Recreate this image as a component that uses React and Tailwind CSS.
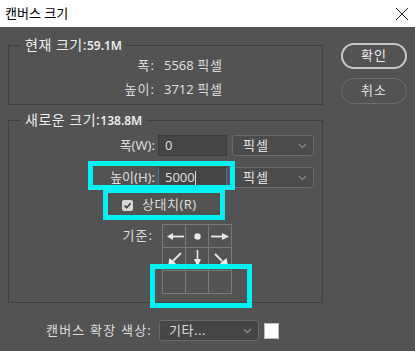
import React from 'react';

const font = { fontFamily: '"Noto Sans", "Noto Sans CJK KR", sans-serif' };

function Chevron() {
  return (
    <svg width="9" height="6" viewBox="0 0 9 6" className="shrink-0">
      <path d="M1 1.2 L4.5 4.6 L8 1.2" fill="none" stroke="#9a9a9a" strokeWidth="1.1" />
    </svg>
  );
}

function UnitSelect({ label, className = '' }) {
  return (
    <div className={`flex items-center justify-between h-[21px] rounded-[3px] border border-[#6a6a6a] bg-[#4b4b4b] pl-[10px] pr-[6px] text-[13px] text-[#e2e2e2] ${className}`}>
      <span className="tracking-[1px]">{label}</span>
      <Chevron />
    </div>
  );
}

function Arrow({ kind }) {
  const c = '#e8e8e8';
  const shapes = {
    dot: <circle cx="11.5" cy="11.5" r="3.2" fill={c} />,
    left: (
      <>
        <line x1="21" y1="11.5" x2="9" y2="11.5" stroke={c} strokeWidth="1.8" />
        <path d="M4 11.5 L10 8 L10 15 Z" fill={c} />
      </>
    ),
    right: (
      <>
        <line x1="2" y1="11.5" x2="14" y2="11.5" stroke={c} strokeWidth="1.8" />
        <path d="M20 11.5 L13 8 L13 15 Z" fill={c} />
      </>
    ),
    down: (
      <>
        <line x1="11.5" y1="2" x2="11.5" y2="12" stroke={c} strokeWidth="1.6" />
        <path d="M11.5 19 L8 11 L15 11 Z" fill={c} />
      </>
    ),
    downLeft: (
      <>
        <line x1="18" y1="5" x2="10" y2="13" stroke={c} strokeWidth="1.8" />
        <path d="M5 18 L6.5 10 L13 15.5 Z" fill={c} />
      </>
    ),
    downRight: (
      <>
        <line x1="6" y1="6" x2="13" y2="13" stroke={c} strokeWidth="1.8" />
        <path d="M19 18 L17.5 10 L11 15.5 Z" fill={c} />
      </>
    ),
  };
  return (
    <svg width="23" height="23" viewBox="0 0 23 23" className="overflow-visible">
      {shapes[kind]}
    </svg>
  );
}

export default function App() {
  const cells = ['left', 'dot', 'right', 'downLeft', 'down', 'downRight', null, null, null];

  return (
    <div className="w-[415px] h-[351px] bg-[#535353] flex flex-col overflow-hidden" style={font}>
      {/* title bar */}
      <div className="h-[27px] bg-white flex items-center justify-between pl-[5px] pr-[6px] shrink-0">
        <span className="text-[13px] text-black">캔버스 크기</span>
        <svg width="14" height="14" viewBox="0 0 14 14">
          <path d="M1 1 L13 13 M13 1 L1 13" stroke="#222" strokeWidth="1" />
        </svg>
      </div>

      <div className="relative flex flex-1">
        {/* left column */}
        <div className="w-[323px] pl-[8px] pt-[10px] flex flex-col">
          {/* current size */}
          <fieldset className="border border-[#3f3f3f] pb-[5px]">
            <legend className="ml-[12px] px-[4px] leading-[16px] text-[14px] text-[#ececec] tracking-[0.5px]">
              현재 크기:<span className="text-[12px] font-semibold tracking-normal">59.1M</span>
            </legend>
            <div className="grid grid-cols-[146px_1fr] gap-x-[9px] gap-y-[4px] mt-[1px] text-[13px] text-[#dcdcdc] leading-[20px]">
              <span className="text-right tracking-[1px]">폭:</span>
              <span>5568 <span className="tracking-[1px]">픽셀</span></span>
              <span className="text-right tracking-[1px]">높이:</span>
              <span>3712 <span className="tracking-[1px]">픽셀</span></span>
            </div>
          </fieldset>

          {/* new size */}
          <fieldset className="mt-[7px] border border-[#3f3f3f] pb-[8px]">
            <legend className="ml-[12px] px-[4px] leading-[16px] text-[14px] text-[#ececec] tracking-[0.5px]">
              새로운 크기:<span className="text-[12px] font-semibold tracking-normal">138.8M</span>
            </legend>
            <div className="flex items-center mt-[6px] text-[13px] text-[#dcdcdc]">
              <span className="w-[146px] text-right">폭(W):</span>
              <div className="ml-[3px] w-[69px] h-[21px] bg-[#454545] border border-[#3a3a3a] flex items-center pl-[6px]">0</div>
              <UnitSelect label="픽셀" className="ml-[5px] w-[82px]" />
            </div>
            <div className="flex items-center mt-[11px] text-[13px] text-[#dcdcdc]">
              <span className="w-[146px] text-right">높이(H):</span>
              <div className="ml-[3px] w-[69px] h-[21px] bg-[#454545] border-x border-y border-x-[#4a6ea8] border-y-[#3a3a3a] flex items-center pl-[6px]">
                5000<span className="w-px h-[14px] bg-[#e0e0e0]" />
              </div>
              <UnitSelect label="픽셀" className="ml-[5px] w-[82px]" />
            </div>
            <div className="flex items-center mt-[9px] pl-[113px] h-[16px] text-[13px] text-[#dcdcdc]">
              <span className="w-[11px] h-[11px] rounded-[2px] bg-[#d8d8d8] flex items-center justify-center">
                <svg width="9" height="9" viewBox="0 0 9 9">
                  <path d="M1.5 4.6 L3.7 6.7 L7.6 2.2" fill="none" stroke="#3a3a3a" strokeWidth="1.6" />
                </svg>
              </span>
              <span className="ml-[9px] tracking-[0.5px]">상대치(R)</span>
            </div>
            <div className="flex items-start mt-[11px] text-[13px] text-[#dcdcdc]">
              <span className="w-[144px] text-right mt-[1px] leading-[20px] tracking-[1px]">기준:</span>
              <div className="ml-[9px] grid grid-cols-[repeat(3,23px)] border-l border-t border-[#7a7a7a]">
                {cells.map((k, i) => (
                  <div key={i} className="w-[23px] h-[23px] border-r border-b border-[#7a7a7a] flex items-center justify-center">
                    {k && <Arrow kind={k} />}
                  </div>
                ))}
              </div>
            </div>
          </fieldset>

          {/* canvas extension color */}
          <div className="flex items-center mt-[17px] text-[13px] text-[#dcdcdc]">
            <span className="w-[144px] text-right tracking-[1.2px]">캔버스 확장 색상:</span>
            <div className="ml-[7px] w-[100px] h-[21px] flex items-center justify-between rounded-[3px] border border-[#6a6a6a] bg-[#454545] pl-[9px] pr-[6px]">
              <span className="tracking-[0.5px]">기타...</span>
              <Chevron />
            </div>
            <div className="ml-[5px] w-[15px] h-[16px] bg-white border border-[#bdbdbd]" />
          </div>
        </div>

        {/* buttons */}
        <div className="ml-[18px] pt-[16px] flex flex-col gap-[9px]">
          <button className="w-[66px] h-[26px] rounded-full border-2 border-[#c6c6c6] text-[13px] text-[#ececec] tracking-[1px]">확인</button>
          <button className="w-[66px] h-[26px] rounded-full border border-[#6e6e6e] text-[13px] text-[#e0e0e0] tracking-[1px]">취소</button>
        </div>

        {/* cyan annotation boxes */}
        <div className="absolute left-[88px] top-[134px] w-[147px] h-[29px] border-[5px] border-[#00f2f2]" />
        <div className="absolute left-[103px] top-[161px] w-[122px] h-[32px] border-[5px] border-[#00f2f2]" />
        <div className="absolute left-[150px] top-[237px] w-[102px] h-[44px] border-[5px] border-[#00f2f2]" />
      </div>
    </div>
  );
}
